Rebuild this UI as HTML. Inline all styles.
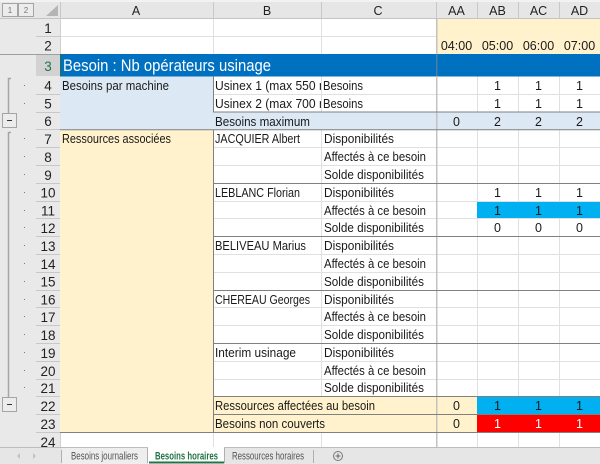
<!DOCTYPE html>
<html><head><meta charset="utf-8"><style>
html,body{margin:0;padding:0;background:#fff;width:600px;height:464px;overflow:hidden}
svg{display:block;font-family:"Liberation Sans",sans-serif}
#s{filter:blur(.3px)}
text{font-size:12.5px;fill:#1a1a1a}
.c{text-anchor:middle}
.n{font-size:13.5px;fill:#222}
.h{font-size:12.5px;fill:#222}
</style></head><body>
<svg id="s" width="600" height="464" viewBox="0 0 600 464" xmlns="http://www.w3.org/2000/svg">
<rect width="600" height="464" fill="#fff"/>
<!-- fills -->
<rect x="436" y="18" width="164" height="36" fill="#fff2cc"/>
<rect x="60" y="76" width="153" height="54" fill="#dce9f5"/>
<rect x="213" y="112" width="387" height="18" fill="#dce9f5"/>
<rect x="60" y="130" width="153" height="302" fill="#fff2cc"/>
<rect x="213" y="396" width="264" height="36" fill="#fff2cc"/>
<rect x="477" y="201" width="123" height="17" fill="#00b0f0"/>
<rect x="477" y="397" width="123" height="17" fill="#00b0f0"/>
<rect x="477" y="415" width="123" height="17" fill="#ff0000"/>
<!-- grid -->
<g stroke="#e0e0e0" stroke-width="1" fill="none">
<path d="M60 36.5H436"/>
<path d="M213 94.5H600M213 147.5H600M213 165.5H600M321 201.5H600M321 218.5H600M213 254.5H600M213 272.5H600M213 307.5H600M213 325.5H600M213 361.5H600M213 379.5H600"/>
<path d="M213.5 18V54M321.5 18V54M321.5 76V112M321.5 130V396M321.5 432V448M213.5 432V448M477.5 76V112M518.5 76V112M559.5 76V112M477.5 130V201M518.5 130V201M559.5 130V201M477.5 218V396M518.5 218V396M559.5 218V396M477.5 432V448M518.5 432V448M559.5 432V448"/>
<path d="M213 201.5H321M213 218.5H321"/>
</g>
<!-- headers -->
<rect x="0" y="0" width="60" height="449" fill="#e9e9e9"/>
<rect x="0" y="2" width="600" height="16" fill="#e6e6e6"/>
<rect x="0" y="0" width="600" height="2" fill="#f2f2f2"/>
<rect x="36" y="54" width="24" height="22" fill="#d2d2d2"/>
<path d="M46 16L58 16L58 5Z" fill="#b5b5b5"/>
<g stroke="#c8c8c8" fill="none">
<path d="M60.5 2V18M213.5 2V18M321.5 2V18M436.5 2V18M477.5 2V18M518.5 2V18M559.5 2V18"/>
<path d="M0 18.5H600" stroke="#c4c4c4"/>
<path d="M36 36.5H60M36 94.5H60M36 112.5H60M36 129.5H60M36 147.5H60M36 165.5H60M36 183.5H60M36 201.5H60M36 218.5H60M36 236.5H60M36 254.5H60M36 272.5H60M36 290.5H60M36 307.5H60M36 325.5H60M36 343.5H60M36 361.5H60M36 379.5H60M36 396.5H60M36 414.5H60M36 432.5H60"/>
<path d="M60.5 18V54M60.5 432V448" stroke="#d0d0d0"/>
</g>
<!-- solid borders -->
<rect x="60" y="54" width="540" height="22.5" fill="#0070c0"/>
<path d="M0 54.5H60" stroke="#9e9e9e"/>
<rect x="60" y="54" width="1" height="22" fill="#217346"/>
<rect x="436" y="18" width="1.5" height="430" fill="#bcbcbc" opacity=".9"/>
<rect x="436" y="54" width="1.5" height="22" fill="#4a7ea6"/>
<g stroke="#808080" fill="none">
<path d="M213.5 76V112M213 112H600M60 129.7H600"/>
<path d="M213.5 130V432M213 183.5H600M213 236.5H600M213 290.5H600M213 343.5H600M213 396.5H600M213 414.5H600M60 432.5H600"/>
</g>
<!-- outline -->
<g stroke="#a5a5a5" fill="#ececec">
<rect x="2.5" y="3.5" width="15" height="13"/>
<rect x="18.5" y="3.5" width="15" height="13"/>
<rect x="2.5" y="113.5" width="14" height="14"/>
<rect x="2.5" y="397.5" width="14" height="14"/>
</g>
<path d="M7 120.5H12M7 404.5H12" stroke="#333"/>
<path d="M11 78.5H8.5V113M11 132.5H8.5V397" stroke="#a6a6a6" stroke-width="1.5" fill="none"/>
<g fill="#777">
<rect x="24" y="85" width="1" height="1"/><rect x="24" y="103" width="1" height="1"/>
<rect x="24" y="138" width="1" height="1"/><rect x="24" y="156" width="1" height="1"/><rect x="24" y="174" width="1" height="1"/>
<rect x="24" y="192" width="1" height="1"/><rect x="24" y="210" width="1" height="1"/><rect x="24" y="227" width="1" height="1"/>
<rect x="24" y="245" width="1" height="1"/><rect x="24" y="263" width="1" height="1"/><rect x="24" y="281" width="1" height="1"/>
<rect x="24" y="299" width="1" height="1"/><rect x="24" y="316" width="1" height="1"/><rect x="24" y="334" width="1" height="1"/>
<rect x="24" y="352" width="1" height="1"/><rect x="24" y="370" width="1" height="1"/><rect x="24" y="387" width="1" height="1"/>
</g>
<text x="10" y="13" class="c" style="font-size:8px;fill:#777">1</text>
<text x="26" y="13" class="c" style="font-size:8px;fill:#777">2</text>
<!-- column headers -->
<g>
<text x="136" y="15" class="c h">A</text><text x="267" y="15" class="c h">B</text><text x="378" y="15" class="c h">C</text>
<text x="456.5" y="15" class="c h">AA</text><text x="497.5" y="15" class="c h">AB</text><text x="538.5" y="15" class="c h">AC</text><text x="579.5" y="15" class="c h">AD</text>
</g>
<!-- row numbers -->
<g>
<text x="48" y="33" class="c n">1</text><text x="48" y="50.5" class="c n">2</text>
<text x="48" y="71" class="c n" style="fill:#217346">3</text>
<text x="48" y="90.5" class="c n">4</text><text x="48" y="108.5" class="c n">5</text><text x="48" y="126" class="c n">6</text>
<text x="48" y="144" class="c n">7</text><text x="48" y="162" class="c n">8</text><text x="48" y="180" class="c n">9</text>
<text x="48" y="197.5" class="c n">10</text><text x="48" y="215.5" class="c n">11</text><text x="48" y="233" class="c n">12</text>
<text x="48" y="251" class="c n">13</text><text x="48" y="269" class="c n">14</text><text x="48" y="286.5" class="c n">15</text>
<text x="48" y="304.5" class="c n">16</text><text x="48" y="322" class="c n">17</text><text x="48" y="340" class="c n">18</text>
<text x="48" y="358" class="c n">19</text><text x="48" y="376" class="c n">20</text><text x="48" y="393" class="c n">21</text>
<text x="48" y="411" class="c n">22</text><text x="48" y="429" class="c n">23</text><text x="48" y="447" class="c n">24</text>
</g>
<!-- hours -->
<text x="456.5" y="50" class="c">04:00</text><text x="497.5" y="50" class="c">05:00</text><text x="538.5" y="50" class="c">06:00</text><text x="579.5" y="50" class="c">07:00</text>
<!-- title -->
<text x="63" y="71" style="font-size:16.5px;fill:#fff" textLength="208" lengthAdjust="spacingAndGlyphs">Besoin : Nb opérateurs usinage</text>
<!-- labels -->
<text x="62" y="90" textLength="107" lengthAdjust="spacingAndGlyphs">Besoins par machine</text>
<text x="62" y="143" textLength="109" lengthAdjust="spacingAndGlyphs">Ressources associées</text>
<svg x="213" y="76" width="108" height="36"><text x="2" y="14" textLength="114" lengthAdjust="spacingAndGlyphs">Usinex 1 (max 550 m</text><text x="2" y="32" textLength="114" lengthAdjust="spacingAndGlyphs">Usinex 2 (max 700 m</text></svg>
<text x="323" y="90" textLength="40" lengthAdjust="spacingAndGlyphs">Besoins</text>
<text x="323" y="108" textLength="40" lengthAdjust="spacingAndGlyphs">Besoins</text>
<text x="215" y="126" textLength="95" lengthAdjust="spacingAndGlyphs">Besoins maximum</text>
<text x="215" y="143" textLength="85" lengthAdjust="spacingAndGlyphs">JACQUIER Albert</text>
<text x="215" y="197" textLength="85" lengthAdjust="spacingAndGlyphs">LEBLANC Florian</text>
<text x="215" y="250" textLength="91" lengthAdjust="spacingAndGlyphs">BELIVEAU Marius</text>
<text x="215" y="304" textLength="95" lengthAdjust="spacingAndGlyphs">CHEREAU Georges</text>
<text x="215" y="357" textLength="81" lengthAdjust="spacingAndGlyphs">Interim usinage</text>
<text x="215" y="410" textLength="160" lengthAdjust="spacingAndGlyphs">Ressources affectées au besoin</text>
<text x="215" y="428" textLength="110" lengthAdjust="spacingAndGlyphs">Besoins non couverts</text>
<g>
<text x="324" y="143" textLength="70" lengthAdjust="spacingAndGlyphs">Disponibilités</text><text x="324" y="161" textLength="102" lengthAdjust="spacingAndGlyphs">Affectés à ce besoin</text><text x="324" y="179" textLength="100" lengthAdjust="spacingAndGlyphs">Solde disponibilités</text>
<text x="324" y="197" textLength="70" lengthAdjust="spacingAndGlyphs">Disponibilités</text><text x="324" y="215" textLength="102" lengthAdjust="spacingAndGlyphs">Affectés à ce besoin</text><text x="324" y="232" textLength="100" lengthAdjust="spacingAndGlyphs">Solde disponibilités</text>
<text x="324" y="250" textLength="70" lengthAdjust="spacingAndGlyphs">Disponibilités</text><text x="324" y="268" textLength="102" lengthAdjust="spacingAndGlyphs">Affectés à ce besoin</text><text x="324" y="286" textLength="100" lengthAdjust="spacingAndGlyphs">Solde disponibilités</text>
<text x="324" y="304" textLength="70" lengthAdjust="spacingAndGlyphs">Disponibilités</text><text x="324" y="321" textLength="102" lengthAdjust="spacingAndGlyphs">Affectés à ce besoin</text><text x="324" y="339" textLength="100" lengthAdjust="spacingAndGlyphs">Solde disponibilités</text>
<text x="324" y="357" textLength="70" lengthAdjust="spacingAndGlyphs">Disponibilités</text><text x="324" y="375" textLength="102" lengthAdjust="spacingAndGlyphs">Affectés à ce besoin</text><text x="324" y="392" textLength="100" lengthAdjust="spacingAndGlyphs">Solde disponibilités</text>
</g>
<!-- numbers -->
<g>
<text x="497.5" y="90" class="c">1</text><text x="538.5" y="90" class="c">1</text><text x="579.5" y="90" class="c">1</text>
<text x="497.5" y="108" class="c">1</text><text x="538.5" y="108" class="c">1</text><text x="579.5" y="108" class="c">1</text>
<text x="456.5" y="126" class="c">0</text><text x="497.5" y="126" class="c">2</text><text x="538.5" y="126" class="c">2</text><text x="579.5" y="126" class="c">2</text>
<text x="497.5" y="197" class="c">1</text><text x="538.5" y="197" class="c">1</text><text x="579.5" y="197" class="c">1</text>
<text x="497.5" y="215" class="c">1</text><text x="538.5" y="215" class="c">1</text><text x="579.5" y="215" class="c">1</text>
<text x="497.5" y="232" class="c">0</text><text x="538.5" y="232" class="c">0</text><text x="579.5" y="232" class="c">0</text>
<text x="456.5" y="410" class="c">0</text><text x="497.5" y="410" class="c">1</text><text x="538.5" y="410" class="c">1</text><text x="579.5" y="410" class="c">1</text>
<text x="456.5" y="428" class="c">0</text><text x="497.5" y="428" class="c" style="fill:#fff">1</text><text x="538.5" y="428" class="c" style="fill:#fff">1</text><text x="579.5" y="428" class="c" style="fill:#fff">1</text>
</g>
<!-- tab bar -->
<rect x="0" y="448" width="600" height="16" fill="#e6e6e6"/>
<path d="M0 447.5H600" stroke="#bdbdbd"/>
<rect x="62" y="448" width="85" height="16" fill="#eeeeee"/>
<path d="M61.5 450V463M147.5 448V463M224.5 448V463M313.5 450V463" stroke="#b0b0b0"/>
<rect x="148" y="447" width="76" height="17" fill="#fff"/>
<path d="M149 462.5H224" stroke="#217346" stroke-width="2"/>
<path d="M20 453L17 456L20 459Z M33 453L36 456L33 459Z" fill="#c4c4c4"/>
<text x="71" y="459.5" style="font-size:11px;fill:#555" textLength="67" lengthAdjust="spacingAndGlyphs">Besoins journaliers</text>
<text x="155" y="459.5" style="font-size:11px;font-weight:bold;fill:#217346" textLength="63" lengthAdjust="spacingAndGlyphs">Besoins horaires</text>
<text x="232" y="459.5" style="font-size:11px;fill:#555" textLength="72" lengthAdjust="spacingAndGlyphs">Ressources horaires</text>
<circle cx="338" cy="456" r="4.5" fill="none" stroke="#777"/>
<path d="M335.5 456H340.5M338 453.5V458.5" stroke="#666"/>
</svg>
</body></html>
